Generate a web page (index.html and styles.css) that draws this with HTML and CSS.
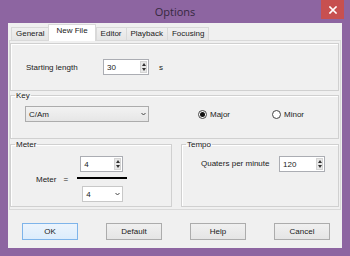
FILE: index.html
```html
<!DOCTYPE html>
<html lang="en">
<head>
    <meta charset="UTF-8">
    <title>Options</title>
    <link rel="stylesheet" href="styles.css">
</head>
<body>
    <div class="window">
        <div class="titlebar">
            <span class="title">Options</span>
            <button class="close" type="button">
                <svg viewBox="0 0 8 8" width="8" height="8">
                    <path d="M1 1L7 7M7 1L1 7" stroke="#fff" stroke-width="1.6" stroke-linecap="square"/>
                </svg>
            </button>
        </div>

        <div class="client">
            <div class="tabs">
                <div class="tab">General</div>
                <div class="tab active">New File</div>
                <div class="tab">Editor</div>
                <div class="tab">Playback</div>
                <div class="tab">Focusing</div>
            </div>

            <div class="panel">
                <div class="group group-length">
                    <span class="field-label">Starting length</span>
                    <div class="spin">
                        <span class="value">30</span>
                        <span class="arrows"><i class="up"></i><i class="down"></i></span>
                    </div>
                    <span class="unit">s</span>
                </div>

                <fieldset class="group">
                    <legend>Key</legend>
                    <div class="group-body key-body">
                        <div class="combo combo-key">
                            <span>C/Am</span>
                            <svg class="chevron" viewBox="0 0 5 4" width="5" height="4"><path d="M0.5 1L2.5 3L4.5 1" fill="none" stroke="#444" stroke-width="1"/></svg>
                        </div>
                        <label class="radio radio-major"><span class="dot checked"></span>Major</label>
                        <label class="radio radio-minor"><span class="dot"></span>Minor</label>
                    </div>
                </fieldset>

                <div class="group-row">
                    <fieldset class="group group-meter">
                        <legend>Meter</legend>
                        <div class="group-body meter-body">
                            <span class="meter-label">Meter<span class="equals">=</span></span>
                            <div class="fraction">
                                <div class="spin spin-small">
                                    <span class="value">4</span>
                                    <span class="arrows"><i class="up"></i><i class="down"></i></span>
                                </div>
                                <div class="bar"></div>
                                <div class="combo combo-beat">
                                    <span>4</span>
                                    <svg class="chevron" viewBox="0 0 5 4" width="5" height="4"><path d="M0.5 1L2.5 3L4.5 1" fill="none" stroke="#444" stroke-width="1"/></svg>
                                </div>
                            </div>
                        </div>
                    </fieldset>

                    <fieldset class="group group-tempo">
                        <legend>Tempo</legend>
                        <div class="group-body tempo-body">
                            <span class="tempo-label">Quaters per minute</span>
                            <div class="spin">
                                <span class="value">120</span>
                                <span class="arrows"><i class="up"></i><i class="down"></i></span>
                            </div>
                        </div>
                    </fieldset>
                </div>
            </div>

            <div class="buttons">
                <button class="btn default" type="button">OK</button>
                <button class="btn" type="button">Default</button>
                <button class="btn" type="button">Help</button>
                <button class="btn" type="button">Cancel</button>
            </div>
        </div>
    </div>
</body>
</html>
```

FILE: styles.css
```css
* {
    margin: 0;
    padding: 0;
    box-sizing: border-box;
}

body {
    background: #8d65a1;
    font-family: 'Liberation Sans', Arial, sans-serif;
    font-size: 8px;
    color: #1a1a1a;
}

.window {
    width: 350px;
    height: 256px;
    display: flex;
    flex-direction: column;
}

/* Title bar */
.titlebar {
    height: 23px;
    display: grid;
    grid-template-columns: 1fr auto 1fr;
    align-items: start;
}

.title {
    grid-column: 2;
    font-family: 'Open Sans', 'Liberation Sans', sans-serif;
    font-size: 11px;
    line-height: 23px;
    color: #35283f;
}

.close {
    grid-column: 3;
    justify-self: end;
    width: 23px;
    height: 19px;
    margin-right: 6px;
    border: none;
    background: #c75050;
    display: flex;
    align-items: center;
    justify-content: center;
}

.client {
    flex: 1;
    margin: 0 8px 8px;
    background: #f0f0f0;
    display: flex;
    flex-direction: column;
}

/* Tabs */
.tabs {
    height: 17px;
    display: flex;
    align-items: flex-end;
    padding-left: 3px;
    position: relative;
    z-index: 1;
}

.tab {
    height: 13px;
    padding: 0 4px;
    line-height: 12px;
    border: 1px solid #d9d9d9;
    border-bottom: none;
    margin-right: -1px;
    background: linear-gradient(#f0f0f0, #e5e5e5);
}

.tab.active {
    height: 17px;
    margin: 0 0 -1px 0;
    padding: 0 7px;
    line-height: 12px;
    background: #fff;
}

.panel {
    height: 170px;
    margin: 0 1px;
    border: 1px solid #d9d9d9;
    background: #f0f0f0;
    padding: 2px 1px 0 0;
    display: flex;
    flex-direction: column;
}

/* Group boxes */
.group {
    border: 1px solid #d0d0d0;
    box-shadow: inset 1px 1px #fff;
    min-width: 0;
}

.group legend {
    margin-left: 4px;
    padding: 0 1px;
    line-height: 9px;
}

.group-body {
    display: flex;
    align-items: center;
}

.group-length {
    height: 48px;
    display: flex;
    align-items: center;
    padding-left: 15px;
}

.field-label {
    width: 77px;
}

.unit {
    margin-left: 10px;
}

.key-body {
    padding: 6px 0 16px 14px;
}

.group-row {
    display: flex;
    gap: 9px;
    margin-top: 1px;
}

.group-meter {
    width: 162px;
}

.group-tempo {
    flex: 1;
}

.meter-body {
    padding: 7px 0 4px 25px;
}

.tempo-body {
    align-items: flex-start;
    padding: 7px 0 4px 19px;
}

.meter-label .equals {
    margin-left: 7px;
}

.fraction {
    width: 50px;
    margin-left: 9px;
    display: flex;
    flex-direction: column;
    align-items: flex-start;
}

.bar {
    width: 50px;
    height: 2px;
    background: #000;
    margin: 5px 0 7px;
}

.tempo-label {
    width: 78px;
    line-height: 16px;
}

/* Spin boxes */
.spin {
    width: 46px;
    height: 16px;
    border: 1px solid #abadb3;
    background: #fff;
    display: flex;
    align-items: center;
    justify-content: space-between;
    padding: 0 1px 0 3px;
}

.spin-small {
    width: 43px;
    margin-left: 3px;
}

.arrows {
    width: 7px;
    height: 12px;
    background: #e8e8e8;
    border: 1px solid #d4d4d4;
    display: flex;
    flex-direction: column;
    align-items: center;
    justify-content: space-around;
}

.arrows i {
    width: 0;
    height: 0;
    border-left: 2px solid transparent;
    border-right: 2px solid transparent;
}

.arrows .up {
    border-bottom: 3px solid #333;
}

.arrows .down {
    border-top: 3px solid #333;
}

/* Combo boxes */
.combo {
    height: 16px;
    border: 1px solid #acacac;
    display: flex;
    align-items: center;
    justify-content: space-between;
    padding: 0 2px 0 3px;
}

.combo-key {
    width: 124px;
    background: linear-gradient(#f2f2f2, #e6e6e6);
}

.combo-beat {
    width: 41px;
    margin-left: 5px;
    background: #fff;
    border-color: #c8c8c8;
}

/* Radio buttons */
.radio {
    display: flex;
    align-items: center;
    gap: 3px;
}

.radio-major {
    margin-left: 49px;
}

.radio-minor {
    margin-left: 42px;
}

.dot {
    width: 9px;
    height: 9px;
    border: 1px solid #444;
    border-radius: 50%;
    background: #fff;
    display: flex;
    align-items: center;
    justify-content: center;
}

.dot.checked::after {
    content: '';
    width: 5px;
    height: 5px;
    border-radius: 50%;
    background: #111;
}

/* Dialog buttons */
.buttons {
    display: flex;
    gap: 28px;
    padding: 13px 0 0 14px;
}

.btn {
    width: 56px;
    height: 17px;
    border: 1px solid #acacac;
    background: linear-gradient(#f0f0f0, #e5e5e5);
    font-family: 'Liberation Sans', Arial, sans-serif;
    font-size: 8px;
    color: #1a1a1a;
}

.btn.default {
    border-color: #7eb4ea;
    background: linear-gradient(#ecf4fc, #dcecfc);
}
```
